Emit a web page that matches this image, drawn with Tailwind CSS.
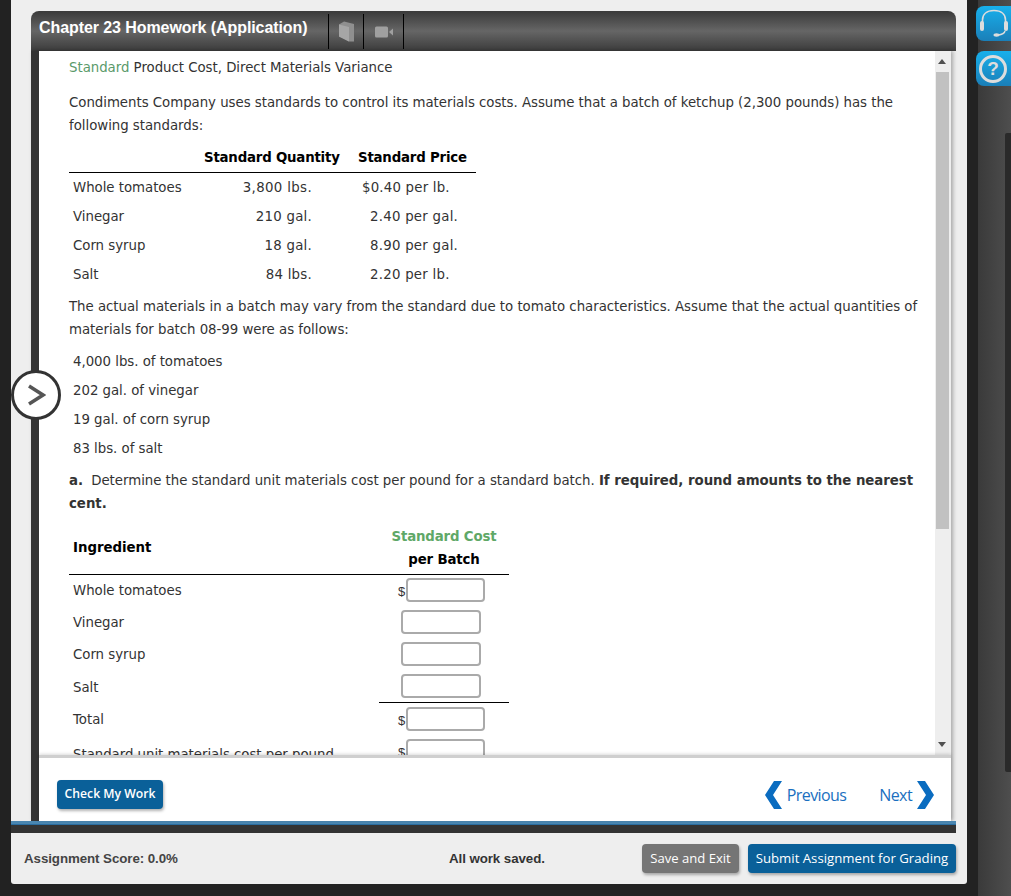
<!DOCTYPE html>
<html lang="en">
<head>
    <meta charset="UTF-8">
    <title>Chapter 23 Homework (Application)</title>
    <script src="https://cdn.jsdelivr.net/npm/@tailwindcss/browser@4"></script>
</head>
<body class="bg-[#222222] h-[896px] w-[1011px] overflow-hidden relative flex font-['DejaVu_Sans',sans-serif]">
    <!-- main panel -->
    <div class="ml-[11px] w-[956px] h-[884px] bg-[#eeeeee] rounded-b-[3px] flex flex-col pt-[11px] shrink-0">
        <div class="ml-[20px] w-[925px] h-[40px] rounded-t-[8px] bg-gradient-to-b from-[#3a3a3a] via-[#666666] to-[#3c3c3c] flex items-center shrink-0">
            <span class="ml-[8px] font-['Liberation_Sans',sans-serif] font-bold text-[16px] tracking-[-0.08px] text-white w-[289px] mb-[7px] whitespace-nowrap">Chapter 23 Homework (Application)</span>
            <div class="w-[36px] h-[35px] mt-[1px] border-x border-black flex items-center justify-center">
                <svg width="17" height="21" viewBox="0 0 17 21"><path d="M1 3.5 L6 0.5 L16 3 V20.5 L11 20.5 L1 15.5Z" fill="#8f8f8f"/><path d="M1 3.5 L11 6 V20.5 L1 15.5Z" fill="#a6a6a6"/></svg>
            </div>
            <div class="w-[40px] h-[35px] mt-[1px] border-r border-black flex items-center justify-center">
                <svg width="18" height="12" viewBox="0 0 18 12"><rect x="0" y="0.5" width="13" height="11" rx="1.5" fill="#a0a0a0"/><path d="M14 6 L18 2.5 V9.5Z" fill="#a0a0a0"/></svg>
            </div>
        </div>

        <div class="ml-[20px] w-[920px] h-[770px] flex border-l-[8px] border-[#333333] shadow-[2px_0_4px_rgba(0,0,0,0.3)] shrink-0">
            <div class="w-[912px] flex flex-col bg-white">
                <!-- scrolling area -->
                <div class="h-[704px] flex relative shrink-0">
                    <div class="w-[896px] h-[704px] overflow-hidden pl-[30px] pt-[5px] text-[13.33px] leading-[23px] tracking-[-0.03px] text-[#333333]">
                        <p><span class="text-[#5a9a6a]">Standard</span> Product Cost, Direct Materials Variance</p>
                        <p class="mt-[12px]">Condiments Company uses standards to control its materials costs. Assume that a batch of ketchup (2,300 pounds) has the<br>following standards:</p>

                        <div class="mt-[7px] w-[407px]">
                            <div class="grid grid-cols-[135px_154px_118px] h-[29px] items-center border-b border-black font-bold text-black pb-[2px] tracking-[-0.2px]">
                                <span></span>
                                <span class="whitespace-nowrap">Standard Quantity</span>
                                <span class="whitespace-nowrap">Standard Price</span>
                            </div>
                            <div class="grid grid-cols-[242px_165px] h-[29px] items-center pl-[4px]">
                                <div class="flex justify-between w-[239px]"><span>Whole tomatoes</span><span class="tracking-[0.35px]">3,800 lbs.</span></div>
                                <span class="pl-[47px] tracking-[0.2px]">$0.40 per lb.</span>
                            </div>
                            <div class="grid grid-cols-[242px_165px] h-[29px] items-center pl-[4px]">
                                <div class="flex justify-between w-[239px]"><span>Vinegar</span><span class="tracking-[0.25px]">210 gal.</span></div>
                                <span class="pl-[55px] tracking-[0.25px]">2.40 per gal.</span>
                            </div>
                            <div class="grid grid-cols-[242px_165px] h-[29px] items-center pl-[4px]">
                                <div class="flex justify-between w-[239px]"><span>Corn syrup</span><span class="tracking-[0.25px]">18 gal.</span></div>
                                <span class="pl-[55px] tracking-[0.25px]">8.90 per gal.</span>
                            </div>
                            <div class="grid grid-cols-[242px_165px] h-[29px] items-center pl-[4px]">
                                <div class="flex justify-between w-[239px]"><span>Salt</span><span class="tracking-[0.25px]">84 lbs.</span></div>
                                <span class="pl-[55px] tracking-[0.25px]">2.20 per lb.</span>
                            </div>
                        </div>

                        <p class="mt-[6px]">The actual materials in a batch may vary from the standard due to tomato characteristics. Assume that the actual quantities of<br>materials for batch 08-99 were as follows:</p>

                        <ul class="mt-[6px] pl-[4px]">
                            <li class="h-[29px] flex items-center">4,000 lbs. of tomatoes</li>
                            <li class="h-[29px] flex items-center">202 gal. of vinegar</li>
                            <li class="h-[29px] flex items-center">19 gal. of corn syrup</li>
                            <li class="h-[29px] flex items-center">83 lbs. of salt</li>
                        </ul>

                        <p class="mt-[6px]"><b class="mr-[4px]">a.</b> Determine the standard unit materials cost per pound for a standard batch. <b>If required, round amounts to the nearest<br>cent.</b></p>

                        <div class="mt-[10px] w-[440px]">
                            <div class="flex h-[50px] border-b border-black font-bold">
                                <span class="w-[310px] pl-[4px] pt-[11px] text-black">Ingredient</span>
                                <div class="w-[130px] text-center tracking-[-0.15px]">
                                    <div class="text-[#5fa867]">Standard Cost</div>
                                    <div class="text-black">per Batch</div>
                                </div>
                            </div>
                            <div class="flex h-[32px] items-center pl-[4px] -mt-[1px]">
                                <span class="w-[325px] mt-[1px]">Whole tomatoes</span><span class="w-[9px] font-['Liberation_Sans',sans-serif] text-[13px] mt-[2px]">$</span>
                                <span class="w-[79px] h-[24px] border-2 border-[#aaaaaa] rounded-[4px] bg-white ml-[-1px]"></span>
                            </div>
                            <div class="flex h-[32px] items-center pl-[4px]">
                                <span class="w-[328px] mt-[1px]">Vinegar</span>
                                <span class="w-[80px] h-[24px] border-2 border-[#aaaaaa] rounded-[4px] bg-white"></span>
                            </div>
                            <div class="flex h-[32px] items-center pl-[4px]">
                                <span class="w-[328px] mt-[1px]">Corn syrup</span>
                                <span class="w-[80px] h-[24px] border-2 border-[#aaaaaa] rounded-[4px] bg-white"></span>
                            </div>
                            <div class="flex h-[32px] items-center pl-[4px]">
                                <span class="w-[328px] mt-[2px]">Salt</span>
                                <span class="w-[80px] h-[24px] border-2 border-[#aaaaaa] rounded-[4px] bg-white"></span>
                            </div>
                            <div class="ml-[310px] w-[130px] border-t border-black"></div>
                            <div class="flex h-[32px] items-center pl-[4px]">
                                <span class="w-[325px] mt-[1px]">Total</span><span class="w-[9px] font-['Liberation_Sans',sans-serif] text-[13px] mt-[2px]">$</span>
                                <span class="w-[79px] h-[24px] border-2 border-[#aaaaaa] rounded-[4px] bg-white ml-[-1px]"></span>
                            </div>
                            <div class="flex h-[32px] items-center pl-[4px]">
                                <span class="w-[325px] mt-[6px]">Standard unit materials cost per pound</span><span class="w-[9px] font-['Liberation_Sans',sans-serif] text-[13px] mt-[2px]">$</span>
                                <span class="w-[79px] h-[24px] border-2 border-[#aaaaaa] rounded-[4px] bg-white ml-[-1px]"></span>
                            </div>
                        </div>
                    </div>
                    <!-- scrollbar -->
                    <div class="w-[16px] h-[704px] bg-[#eeeeee] flex flex-col shrink-0">
                        <svg class="mt-[8px] ml-[3px]" width="8" height="5" viewBox="0 0 8 5"><path d="M4 0 L8 5 H0Z" fill="#505050"/></svg>
                        <div class="mt-[8px] ml-[1px] w-[13px] h-[457px] bg-[#c1c1c1]"></div>
                        <svg class="mt-[213px] ml-[3px]" width="8" height="5" viewBox="0 0 8 5"><path d="M0 0 H8 L4 5Z" fill="#505050"/></svg>
                    </div>
                </div>
                <!-- bottom nav -->
                <div class="h-[66px] flex items-center justify-between pl-[18px] pr-[17px] pt-[10px] border-t-[3px] border-[#cfcfcf] shadow-[0_-1px_3px_rgba(0,0,0,0.15)] bg-white relative font-['Open_Sans',sans-serif]">
                    <button class="h-[29px] w-[106px] rounded-[4px] bg-[#0a6099] text-white text-[12.2px] font-semibold whitespace-nowrap shadow-[1px_2px_3px_rgba(0,0,0,0.3)]">Check My Work</button>
                    <div class="flex items-center text-[16px] text-[#1a6fc0] tracking-[-0.6px]">
                        <svg width="19" height="28" viewBox="0 0 19 28"><path d="M10 0 H18 L9 14 L18 28 H10 L1 14Z" fill="#0a6cc0"/></svg>
                        <span class="ml-[4px]">Previous</span>
                        <span class="ml-[33px]">Next</span>
                        <svg class="ml-[5px]" width="17" height="28" viewBox="0 0 17 28"><path d="M0 0 H8 L17 14 L8 28 H0 L9 14Z" fill="#0a6cc0"/></svg>
                    </div>
                </div>
            </div>
        </div>

        <div class="w-[945px] h-[4px] bg-[#4a86b0] border-b border-[#2a6da0] shrink-0"></div>
        <div class="w-[945px] h-[8px] bg-[#333333] shrink-0"></div>

        <!-- footer -->
        <div class="flex-1 flex items-center pl-[13px] pr-[11px] font-['Liberation_Sans',sans-serif] font-bold text-[13.33px] tracking-[-0.08px]">
            <span class="w-[425px] text-[#444444]">Assignment Score: 0.0%</span>
            <span class="w-[193px] text-[#333333]">All work saved.</span>
            <button class="h-[29px] w-[97px] rounded-[4px] bg-[#757575] text-white text-[13.1px] font-normal tracking-normal font-['Open_Sans',sans-serif] whitespace-nowrap shadow-[1px_2px_3px_rgba(0,0,0,0.3)]">Save and Exit</button>
            <button class="h-[29px] w-[208px] ml-[9px] rounded-[4px] bg-[#0a6099] text-white text-[13.2px] font-normal tracking-normal font-['Open_Sans',sans-serif] whitespace-nowrap shadow-[1px_2px_3px_rgba(0,0,0,0.3)]">Submit Assignment for Grading</button>
        </div>
    </div>

    <!-- right sidebar -->
    <div class="ml-[11px] w-[33px] h-[896px] bg-gradient-to-r from-[#3a3a3a] to-[#4e4e4e]"></div>

    <!-- overlays -->
    <div class="absolute left-[1005px] top-[133px] w-[6px] h-[639px] rounded-l-[2px] bg-[#2a2a2a]"></div>
    <button class="absolute left-[976px] top-[6px] w-[35px] h-[35px] rounded-l-[8px] bg-gradient-to-b from-[#17b0ec] to-[#1a7fb8] flex items-center pl-[3px]">
        <svg width="30" height="30" viewBox="0 0 30 30" fill="none"><path d="M3.5 14 V11 C3.5 5 8 1.5 15 1.5 C22 1.5 26.5 5 26.5 11 V14" stroke="#dddddd" stroke-width="1.6"/><rect x="1" y="12" width="4" height="10" rx="2" fill="#dddddd"/><rect x="25" y="12" width="4" height="10" rx="2" fill="#dddddd"/><path d="M26 22 C25.5 24.5 23 25.5 19 26" stroke="#dddddd" stroke-width="1.4"/><ellipse cx="17.5" cy="26" rx="3" ry="1.7" fill="#dddddd"/></svg>
    </button>
    <button class="absolute left-[976px] top-[51px] w-[35px] h-[35px] rounded-l-[8px] bg-gradient-to-b from-[#17b0ec] to-[#1a7fb8] flex items-center pl-[3px]">
        <span class="w-[28px] h-[28px] rounded-full border-[3px] border-[#dddddd] text-[#dddddd] text-[19px] font-bold font-['Liberation_Sans',sans-serif] leading-[22px] text-center">?</span>
    </button>
    <button class="absolute left-[11px] top-[370px] w-[50px] h-[50px] rounded-full bg-white border-[3px] border-[#333333] flex items-center justify-center">
        <svg width="20" height="24" viewBox="0 0 20 24" fill="none"><path d="M3 3 L17 12 L3 21" stroke="#555555" stroke-width="3.5"/></svg>
    </button>
</body>
</html>
